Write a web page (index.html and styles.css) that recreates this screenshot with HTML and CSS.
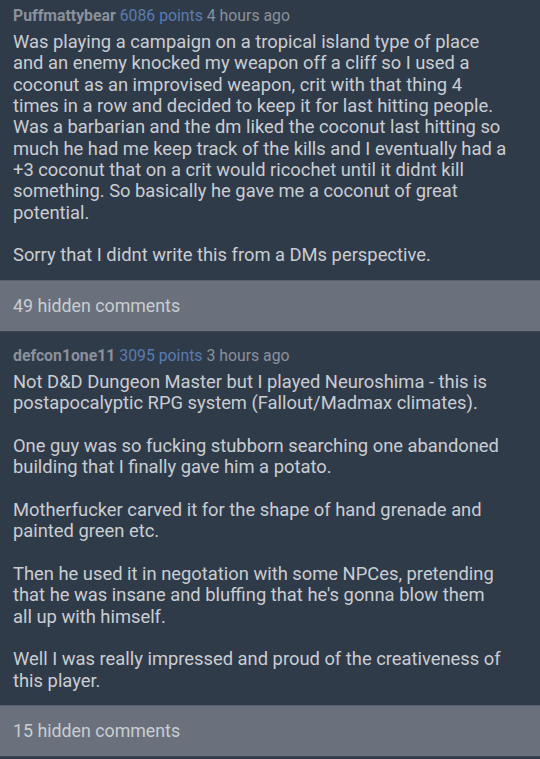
FILE: index.html
```html
<!DOCTYPE html>
<html>
<head>
<meta charset="utf-8">
<link rel="stylesheet" href="styles.css">
</head>
<body>
<div class="comment comment-first">
  <div class="meta"><span class="user">Puffmattybear</span> <span class="points">6086 points</span> <span class="time">4 hours ago</span></div>
  <div class="body">
    <p>Was playing a campaign on a tropical island type of place and an enemy knocked my weapon off a cliff so I used a coconut as an improvised weapon, crit with that thing 4 times in a row and decided to keep it for last hitting people. Was a barbarian and the dm liked the coconut last hitting so much he had me keep track of the kills and I eventually had a +3 coconut that on a crit would ricochet until it didnt kill something. So basically he gave me a coconut of great potential.</p>
    <p>Sorry that I didnt write this from a DMs perspective.</p>
  </div>
</div>
<div class="hidden">49 hidden comments</div>
<div class="comment">
  <div class="meta"><span class="user">defcon1one11</span> <span class="points">3095 points</span> <span class="time">3 hours ago</span></div>
  <div class="body">
    <p>Not D&amp;D Dungeon Master but I played Neuroshima - this is postapocalyptic RPG system (Fallout/Madmax climates).</p>
    <p>One guy was so fucking stubborn searching one abandoned building that I finally gave him a potato.</p>
    <p>Motherfucker carved it for the shape of hand grenade and painted green etc.</p>
    <p>Then he used it in negotation with some NPCes, pretending that he was insane and bluffing that he's gonna blow them all up with himself.</p>
    <p>Well I was really impressed and proud of the creativeness of this player.</p>
  </div>
</div>
<div class="hidden">15 hidden comments</div>
</body>
</html>
```
FILE: styles.css
```css
html, body {
  margin: 0;
  padding: 0;
  background: #303b4a;
  font-family: Roboto, "Liberation Sans", sans-serif;
}
.comment {
  padding: 14px 32px 14px 13px;
  background: #303b4a;
}
.comment-first {
  padding-top: 6px;
}
.meta {
  font-size: 15.8px;
  line-height: 20px;
  color: #8a919b;
  margin-bottom: 5px;
}
.user {
  font-weight: bold;
}
.points {
  color: #5a7cb2;
}
.body {
  font-size: 18.35px;
  line-height: 21.35px;
  color: #c9cdd2;
}
.body p {
  margin: 0 0 21.35px 0;
}
.body p:last-child {
  margin-bottom: 0;
}
.hidden {
  background: #6a717d;
  color: #c9cdd2;
  font-size: 17.8px;
  padding: 0 13px;
  height: 50px;
  line-height: 50px;
  border-top: 1px solid #5a6271;
  border-bottom: 1px solid #3a4452;
}
```
